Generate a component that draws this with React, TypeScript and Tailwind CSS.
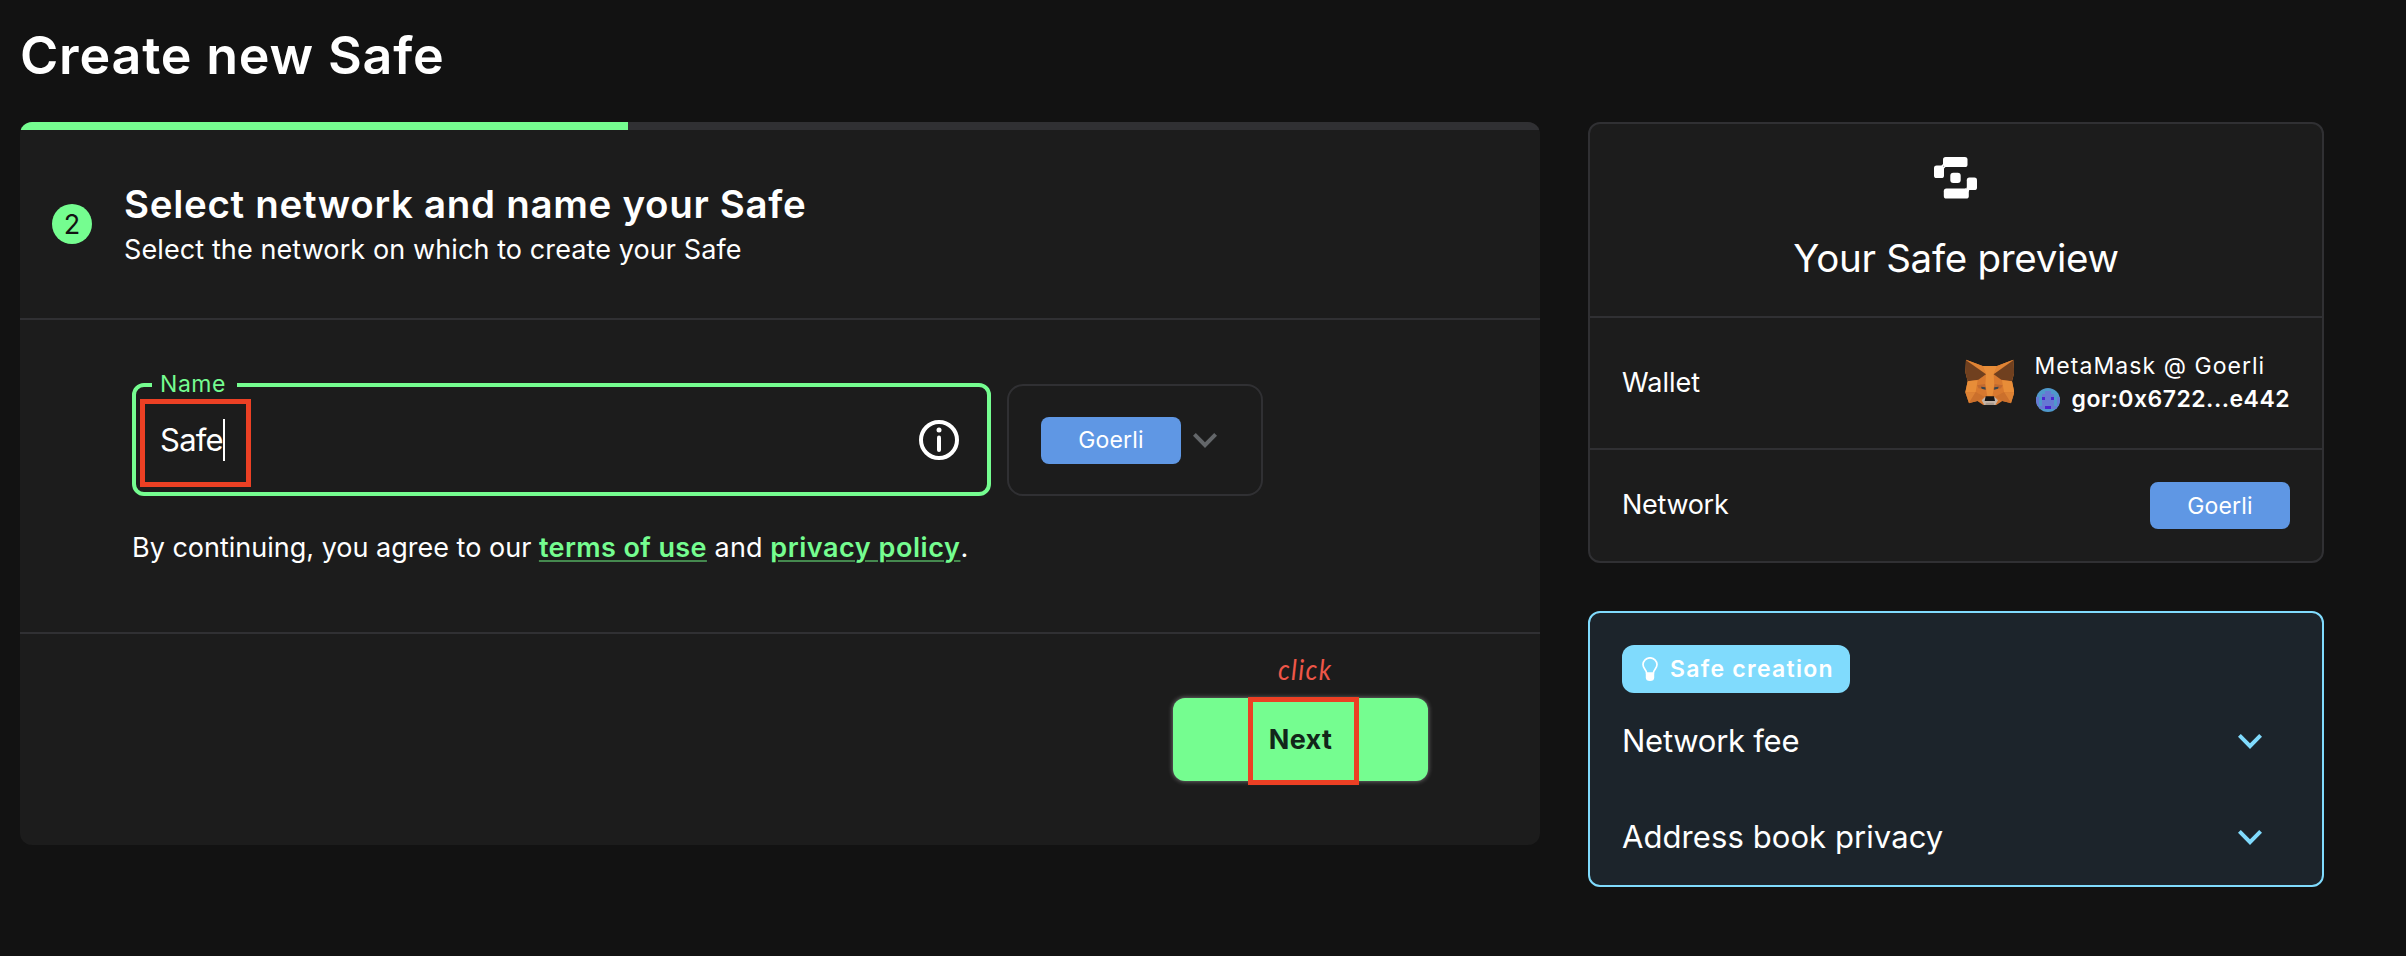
import type { ReactNode } from "react";

function ChevronDown({ className }: { className: string }) {
  return (
    <svg viewBox="0 0 24 15" className={`h-[15px] w-6 shrink-0 ${className}`} fill="currentColor">
      <path d="M2.8 0 12 9.2 21.2 0 24 2.8 12 14.9 0 2.8Z" />
    </svg>
  );
}

function SafeLogo() {
  return (
    <svg viewBox="0 0 43 42" className="mr-0.5 h-[42px] w-[43px]" fill="#fff">
      <rect x="9" y="0" width="24.5" height="10" rx="2.6" />
      <rect x="0" y="8.6" width="10" height="12.4" rx="2.6" />
      <path d="M7.5 8.6 9 7V10H11.5L10 11.5H7.5Z" />
      <rect x="16.3" y="15.8" width="10.4" height="10.2" rx="3" />
      <rect x="32.8" y="20.6" width="10.2" height="12.4" rx="2.6" />
      <rect x="9.8" y="31.6" width="25" height="10" rx="2.6" />
      <path d="M32.8 30H35.3V33L34.8 34.5H32L31 31.6H32.8Z" />
    </svg>
  );
}

function FoxIcon() {
  return (
    <svg viewBox="22 20 147 141" className="h-[47px] w-[49px] shrink-0">
      <path d="M25 22 75 41H118L167 22 170 60 163 87 170 120 160 153 134 146 116 158H77L59 146 34 153 23 120 30 87 23 60Z" fill="#d8792f" />
      <path d="M75 41H118L108 66 110 100 104 132H89L83 100 85 66Z" fill="#e88d38" />
      <path d="M25 22 75 41 85 66Z" fill="#e08434" />
      <path d="M167 22 118 41 108 66Z" fill="#e08434" />
      <path d="M25 24 85 66 62 82 30 87 23 60Z" fill="#70401f" />
      <path d="M167 24 108 66 131 82 163 87 170 60Z" fill="#70401f" />
      <path d="M30 87 60 84 54 119 23 120Z" fill="#e88d38" />
      <path d="M163 87 133 84 139 119 170 120Z" fill="#e88d38" />
      <path d="M23 120H54L34 152Z" fill="#dd8234" />
      <path d="M170 120H139L160 152Z" fill="#dd8234" />
      <path d="M54 119 82 134 59 146 34 152Z" fill="#cb702c" />
      <path d="M139 119 111 134 134 146 160 152Z" fill="#cb702c" />
      <path d="M58 99 82 95 86 112 63 108Z" fill="#c26a30" />
      <path d="M135 99 111 95 107 112 130 108Z" fill="#c26a30" />
      <path d="M70 103 83 105 84 112 72 109Z" fill="#3b454c" />
      <path d="M123 103 110 105 109 112 121 109Z" fill="#3b454c" />
      <path d="M82 134 72 144 80 158H113L121 144 111 134Z" fill="#c4b5a9" />
      <path d="M84 132H109L112 146H81Z" fill="#161616" />
      <path d="M85 151H108L110 158H83Z" fill="#a89a8e" />
    </svg>
  );
}

function Identicon() {
  return (
    <svg viewBox="0 0 8 8" className="size-6 shrink-0 rounded-full" shapeRendering="crispEdges">
      <rect width="8" height="8" fill="#4f98cb" />
      <path d="M3 1H5V2H3ZM2 2H6V6H2ZM0 3H1V6H0ZM7 3H8V6H7ZM1 6H2V7H1ZM6 6H7V7H6ZM2 6H3V7H2ZM5 6H6V7H5Z" fill="#6679d3" />
      <path d="M2 3H3V4H2ZM5 3H6V4H5ZM3 6H5V7H3Z" fill="#4a23cf" />
    </svg>
  );
}

function Bulb() {
  return (
    <svg viewBox="0 0 16 24" className="h-6 w-4 shrink-0" fill="none" stroke="#fff" strokeWidth="1.7">
      <path d="M4.6 16C4.4 12.8 1 11.4 1 7.6A7 6.8 0 0 1 15 7.6C15 11.4 11.6 12.8 11.4 16Z" />
      <path d="M3.8 16H12.2V20.5Q12.2 24 8 24T3.8 20.5Z" fill="#fff" stroke="none" />
    </svg>
  );
}

function InfoIcon() {
  return (
    <svg viewBox="0 0 40 40" className="size-10 shrink-0">
      <circle cx="20" cy="20" r="18" fill="none" stroke="#fff" strokeWidth="4" />
      <circle cx="20" cy="10" r="2.5" fill="#fff" />
      <path d="M20 17.5V30" stroke="#fff" strokeWidth="4" strokeLinecap="round" />
    </svg>
  );
}

function GoerliChip() {
  return (
    <span className="flex h-[47px] w-[140px] items-center justify-center rounded-lg bg-[#5f97e4] pt-px text-[23px] leading-none tracking-[0.2px]">
      Goerli
    </span>
  );
}

function Link({ children }: { children: ReactNode }) {
  return (
    <a className="font-semibold text-[#75fd90] underline decoration-[#45894f] decoration-2 underline-offset-[3px]">
      {children}
    </a>
  );
}

function AccordionRow({ label, className }: { label: string; className: string }) {
  return (
    <div className="flex h-24 items-center justify-between pr-[60px] pl-8">
      <span className={`-mt-px text-[31px] leading-none ${className}`}>{label}</span>
      <ChevronDown className="text-[#80dbfd]" />
    </div>
  );
}

export default function App() {
  return (
    <div className="h-[956px] w-[2406px] overflow-hidden bg-[#121212] pt-[25px] pl-5 font-['Inter',sans-serif] text-white">
      <h1 className="text-[52px] leading-[62px] font-semibold tracking-[0.8px]">Create new Safe</h1>

      <div className="mt-[35px] flex items-start gap-12">
        <main className="h-[723px] w-[1520px] overflow-hidden rounded-xl bg-[#1c1c1c]">
          <div className="h-2 bg-[#303033]">
            <div className="h-full w-[608px] bg-[#75fd90]" />
          </div>

          <header className="flex h-[190px] items-center border-b-2 border-[#303033] pl-8">
            <div className="flex size-10 items-center justify-center rounded-full bg-[#75fd90] text-[27px] leading-none text-[#121312]">
              2
            </div>
            <div className="ml-8">
              <h2 className="text-[38.5px] leading-[50px] font-semibold tracking-[0.69px]">
                Select network and name your Safe
              </h2>
              <p className="mt-px -mb-px text-[27px] leading-10 tracking-[0.1px]">
                Select the network on which to create your Safe
              </p>
            </div>
          </header>

          <section className="h-[314px] border-b-2 border-[#303033] pt-[63px] pl-28">
            <div className="flex items-end gap-4">
              <div className="relative flex h-[113px] w-[859px] items-center justify-between rounded-xl border-4 border-[#75fd90] pr-7 pl-6">
                <span className="absolute -top-[21px] left-4 bg-[#1c1c1c] pr-[11px] pl-2 text-[23px] leading-[36px] tracking-[0.55px] text-[#75fd90]">
                  Name
                </span>
                <span className="flex items-center text-[31px] leading-none tracking-[-0.75px]">
                  Safe
                  <span className="h-[42px] w-0.5 bg-white" />
                </span>
                <InfoIcon />
                <div className="absolute top-3 left-1 h-[88px] w-[111px] border-5 border-[#ec4024]" />
              </div>
              <div className="flex h-28 w-64 items-center gap-3 rounded-2xl border-2 border-[#303033] pl-8">
                <GoerliChip />
                <ChevronDown className="text-[#636669]" />
              </div>
            </div>
            <p className="mt-8 text-[27px] leading-10">
              By continuing, you agree to our{" "}
              <span className="tracking-[0.4px]">
                <Link>terms of use</Link>
              </span>
              <span className="tracking-[0.1px]"> and </span>
              <span className="tracking-[0.55px]">
                <Link>privacy policy</Link>
              </span>
              .
            </p>
          </section>

          <footer className="flex justify-end pt-16 pr-28">
            <div className="relative flex h-[83px] w-[255px] items-center justify-center rounded-xl bg-[#75fd90] text-[27px] leading-none font-bold tracking-[0.4px] text-[#12261a] shadow-[0_0_5px_rgba(255,255,255,0.45)]">
              Next
              <div className="absolute -top-px left-[75px] h-[88px] w-[111px] border-5 border-[#ec4024]" />
              <span className="absolute -top-[47px] left-[105px] origin-left scale-x-90 text-[29px] leading-9 font-normal tracking-[1.4px] text-[#ee5648] italic [font-family:Lato,sans-serif]">
                click
              </span>
            </div>
          </footer>
        </main>

        <aside className="flex w-[736px] flex-col gap-12">
          <section className="h-[441px] rounded-xl border-2 border-[#303033] bg-[#1c1c1c]">
            <div className="flex h-[194px] flex-col items-center border-b-2 border-[#303033] pt-[33px]">
              <SafeLogo />
              <h2 className="mt-[35px] text-[38.5px] leading-[48px] tracking-[-0.3px]">Your Safe preview</h2>
            </div>
            <div className="flex h-[132px] items-center justify-between border-b-2 border-[#303033] pr-8 pb-0.5 pl-8">
              <span className="text-[27px] leading-none">Wallet</span>
              <div className="flex items-center">
                <FoxIcon />
                <div className="ml-[22px] flex flex-col pt-0.5">
                  <span className="-ml-px text-[23px] leading-[33px] tracking-[1.05px]">MetaMask @ Goerli</span>
                  <div className="flex items-center gap-3 text-[23px] leading-[33px] font-semibold tracking-[0.48px]">
                    <Identicon />
                    gor:0x6722...e442
                  </div>
                </div>
              </div>
            </div>
            <div className="flex h-[111px] items-center justify-between px-8">
              <span className="-mt-[3px] text-[27px] leading-none tracking-[-0.3px]">Network</span>
              <GoerliChip />
            </div>
          </section>

          <section className="h-[276px] rounded-xl border-2 border-[#80dbfd] bg-[#1c242b] pt-8">
            <div className="ml-8 flex h-12 w-[228px] items-center gap-3 rounded-xl bg-[#80dbfd] pl-5 text-[23px] leading-none font-semibold tracking-[1.28px]">
              <Bulb />
              Safe creation
            </div>
            <AccordionRow label="Network fee" className="tracking-[-0.25px]" />
            <AccordionRow label="Address book privacy" className="tracking-[0.08px]" />
          </section>
        </aside>
      </div>
    </div>
  );
}
